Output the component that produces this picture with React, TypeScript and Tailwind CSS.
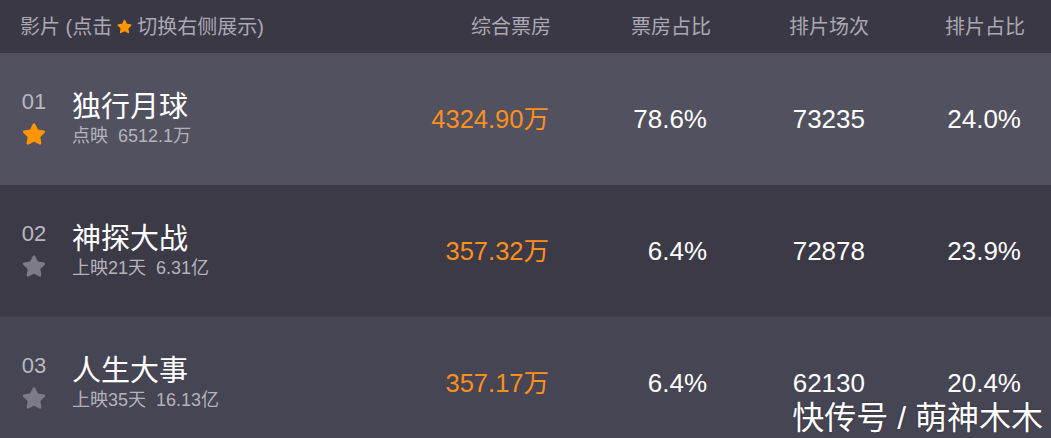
import { FaStar } from "react-icons/fa";

type Movie = {
  rank: string;
  name: string;
  sub: string;
  boxOffice: string;
  boxRate: string;
  shows: string;
  showRate: string;
  bg: string;
  active?: boolean;
};

const movies: Movie[] = [
  {
    rank: "01",
    name: "独行月球",
    sub: "点映\u00a0\u00a06512.1万",
    boxOffice: "4324.90万",
    boxRate: "78.6%",
    shows: "73235",
    showRate: "24.0%",
    bg: "bg-[#52515f]",
    active: true,
  },
  {
    rank: "02",
    name: "神探大战",
    sub: "上映21天\u00a0\u00a06.31亿",
    boxOffice: "357.32万",
    boxRate: "6.4%",
    shows: "72878",
    showRate: "23.9%",
    bg: "bg-[#3c3a47]",
  },
  {
    rank: "03",
    name: "人生大事",
    sub: "上映35天\u00a0\u00a016.13亿",
    boxOffice: "357.17万",
    boxRate: "6.4%",
    shows: "62130",
    showRate: "20.4%",
    bg: "bg-[#464553]",
  },
];

const font = "font-['Liberation_Sans','Noto_Sans_CJK_SC',sans-serif]";

const App = () => {
  return (
    <div className={`relative w-[1051px] h-[438px] overflow-hidden bg-[#464553] ${font}`}>
      {/* Header */}
      <div className="grid grid-cols-[minmax(0,1fr)_150px_158px_158px_156px] items-center h-[53px] bg-[#3a3845] pl-[20px] pr-[26px] text-[20px] text-[#a9a8b3]">
        <div className="flex items-center">
          <span>影片 (点击</span>
          <FaStar className="mx-[5px] text-[15px] text-[#ff9500]" />
          <span>切换右侧展示)</span>
        </div>
        <div className="text-right pr-[2px]">综合票房</div>
        <div className="text-right">票房占比</div>
        <div className="text-right">排片场次</div>
        <div className="text-right">排片占比</div>
      </div>

      {/* Rows */}
      {movies.map((m) => (
        <div
          key={m.rank}
          className={`grid grid-cols-[minmax(0,1fr)_150px_158px_158px_156px] items-center h-[132px] pl-[21px] pr-[30px] ${m.bg}`}
        >
          <div className="flex items-start pb-[2px]">
            <div className="flex flex-col items-center w-[26px] mr-[25px]">
              <span className="text-[22px] leading-[24px] text-[#b9b8c1]">{m.rank}</span>
              <FaStar
                className={`mt-[8px] text-[24px] ${m.active ? "text-[#ff9500]" : "text-[#7c7b87]"}`}
              />
            </div>
            <div className="flex flex-col">
              <span className="text-[29px] leading-[34px] text-white">{m.name}</span>
              <span className="mt-[1px] text-[18px] leading-[22px] text-[#b4b3bc]">{m.sub}</span>
            </div>
          </div>
          <div className="text-right text-[25.5px] text-[#ff8f1c]">{m.boxOffice}</div>
          <div className="text-right text-[26px] text-white">{m.boxRate}</div>
          <div className="text-right text-[26px] text-white">{m.shows}</div>
          <div className="text-right text-[26px] text-white">{m.showRate}</div>
        </div>
      ))}

      {/* Watermark */}
      <div className="absolute right-[8px] bottom-[1px] text-[32px] leading-[38px] text-white [text-shadow:0_0_2px_rgba(0,0,0,0.4)]">
        快传号 / 萌神木木
      </div>
    </div>
  );
};

export default App;
